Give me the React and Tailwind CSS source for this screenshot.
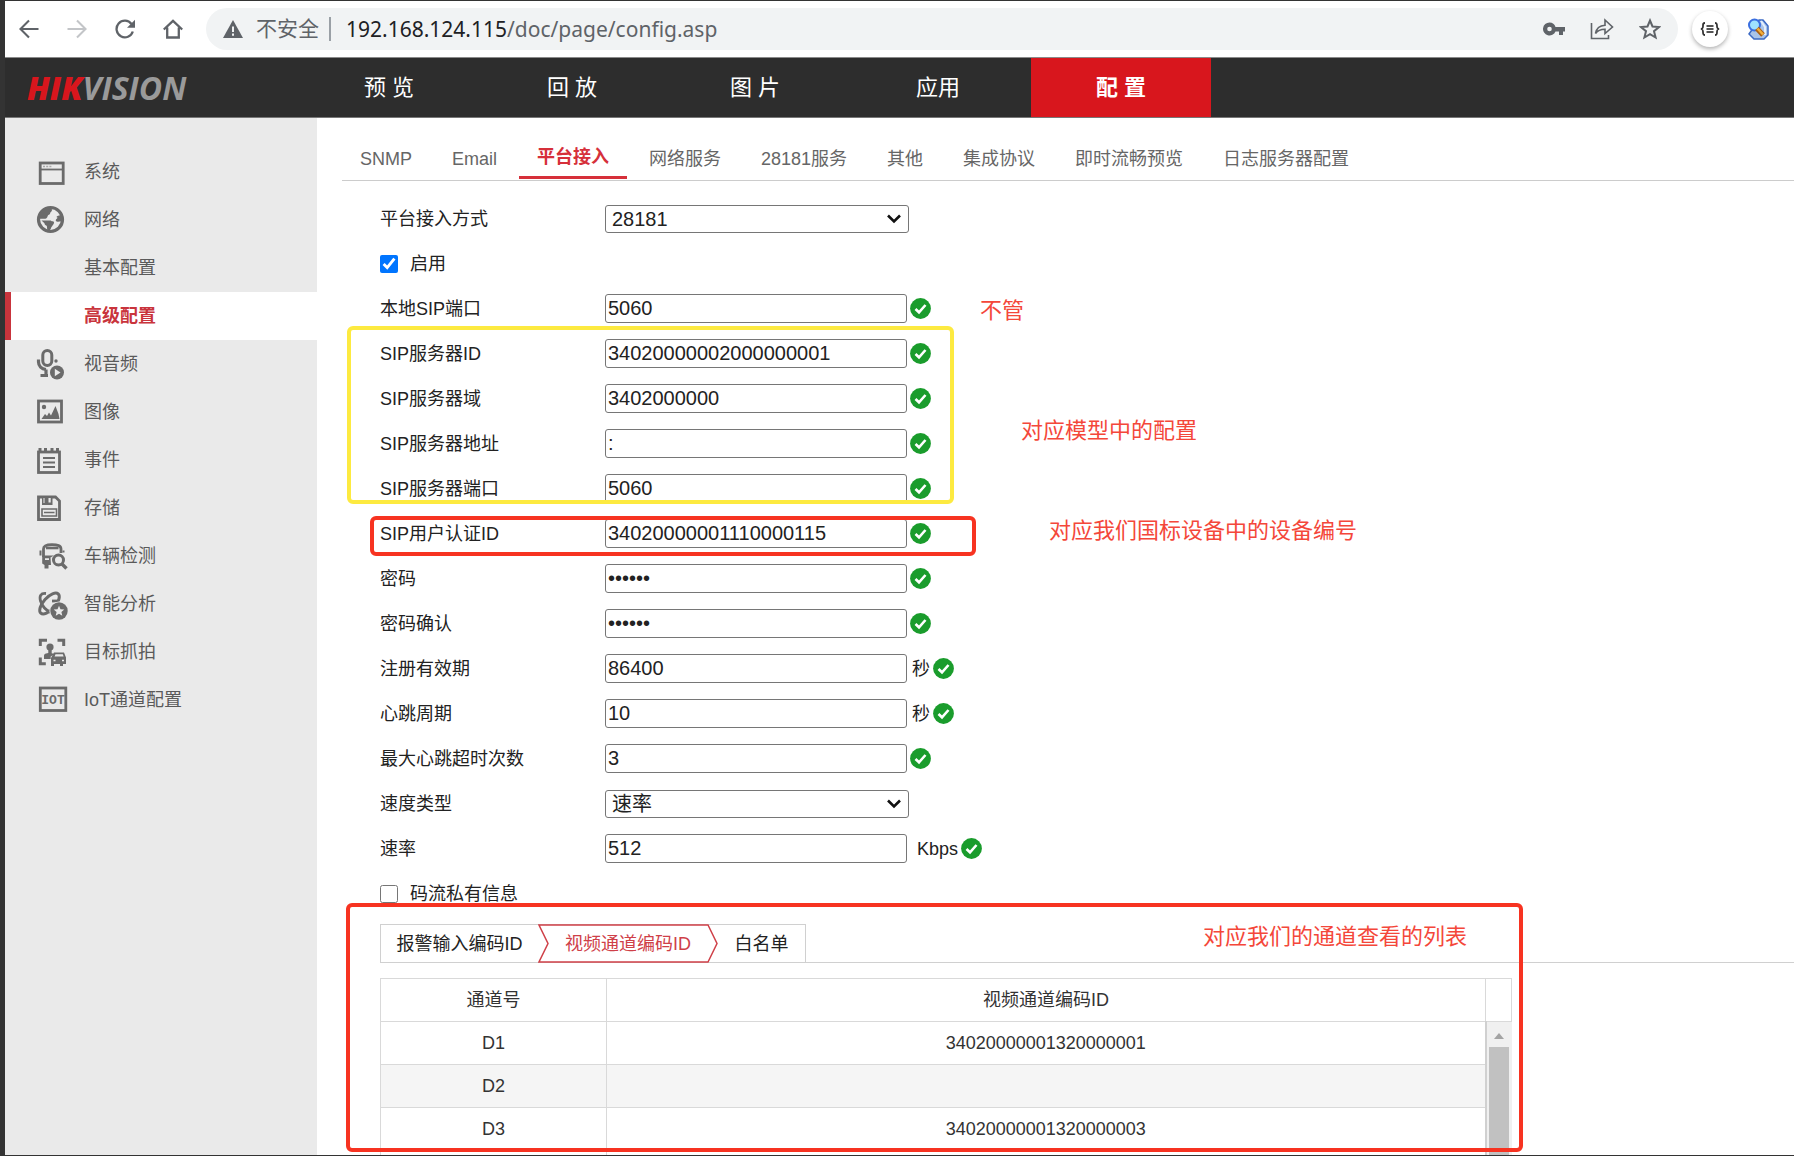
import React from "react";

const G = "#6b6b6b";

function Icon({ children }) {
  return (
    <svg viewBox="0 0 32 32" className="h-8 w-8 shrink-0" fill="none" stroke={G} strokeWidth="2.8" aria-hidden="true">
      {children}
    </svg>
  );
}

const icons = {
  system: (
    <Icon>
      <rect x="4.2" y="7" width="23" height="20.5" />
      <path d="M4 13.500h23" strokeWidth="1.8" />
      <path d="M7 10.500h9" strokeWidth="1.4" strokeDasharray="2 1.2" stroke="#aaa" />
    </Icon>
  ),
  network: (
    <Icon>
      <circle cx="14.5" cy="15.500" r="12" strokeWidth="3.2" />
      <path
        stroke="none"
        fill={G}
        d="M11 3c3 .2 5 1 5 3 0 1.600-1.600 1.800-1.800 3.200-.2 1.600-2.400 1.400-2.600 3-.2 1.600-1.600 2.600-3.600 2.600H3l1-6zM5.500 16.500h8.500c1.200 0 1.400.8 2.600.8 1.600 0 1.800 1.400 1 2.800l-2.400 3.400c-.4 1.800-1.200 3-2.400 3-1.600 0-1.800-1.800-1.800-3.600 0-1.800-2.500-1.400-2.500-3.600zM26 10.500l-4.500 1.500c-1.400.4-1 1.600.2 1.800L20 15.500c-.8 1.400.4 2.400 2 2.200l5-.7z"
      />
    </Icon>
  ),
  av: (
    <Icon>
      <rect x="6.800" y="2.500" width="9" height="15" rx="4.500" strokeWidth="3" />
      <path d="M2.500 11.500V14c0 4 3 7 7.500 7.500M10 21.500v5M4.500 27.500H12" strokeWidth="3.200" />
      <circle cx="20" cy="13" r="1.700" fill={G} stroke="none" />
      <circle cx="21" cy="24.500" r="7" fill={G} stroke="none" />
      <path d="M18.800 20.700l5.700 3.800-5.700 3.800z" fill="#eaeaea" stroke="none" />
    </Icon>
  ),
  image: (
    <Icon>
      <rect x="2.500" y="5" width="23" height="21" />
      <circle cx="8" cy="11" r="2.200" fill={G} stroke="none" />
      <path d="M5.500 23l3.500-5 2 2 2-3.500 2 3 4.500-9.500 3 8 1 5z" fill={G} stroke="none" />
    </Icon>
  ),
  event: (
    <Icon>
      <rect x="2.500" y="8" width="21" height="20.500" />
      <path d="M4 4v4M9.500 4v4M16 4v4M21.500 4v4" strokeWidth="3" />
      <path d="M7 14h12M7 18.500h12M7 23h12" strokeWidth="1.800" />
    </Icon>
  ),
  storage: (
    <Icon>
      <path d="M2.500 5h17l4 4v18.500h-21z" />
      <path d="M6 4.500h10.500V13H6z" fill={G} stroke="none" />
      <path d="M12.500 6h2.200v4.500h-2.200zM7.500 6h1v5h-1z" fill="#eaeaea" stroke="none" />
      <path d="M6 17h14.500v7H6zM8 20.500h10.500" strokeWidth="1.600" />
    </Icon>
  ),
  vehicle: (
    <Icon>
      <path d="M7.500 17V9c0-3.500 3-4.300 8.500-4.300s9 .8 9 4.300v4" strokeWidth="2.800" />
      <path d="M10 8h12.500" strokeWidth="2.600" />
      <path d="M4.500 10.500v5M27.500 10.500v2" strokeWidth="2" />
      <path d="M6.200 15.500H18l-3.500 2 .5 7.500H12.500v3.500H8.500V25l-2.300-1.500zM9 20h4v-1.800H9z" fill={G} stroke="none" fillRule="evenodd" />
      <circle cx="22.500" cy="20" r="5" strokeWidth="3" />
      <path d="M26 24l4.500 4.500" strokeWidth="3.400" />
    </Icon>
  ),
  analysis: (
    <Icon>
      <ellipse cx="13.500" cy="15.500" rx="6" ry="13" transform="rotate(42 13.500 15.500)" strokeWidth="3" />
      <path d="M10 5.500C4.500 5 3.200 8 4.500 13c1.600 4.600 5.500 9.500 10.500 11.500" strokeWidth="2.800" />
      <path d="M16 13h6.500" strokeWidth="2.800" />
      <circle cx="23" cy="23" r="9.600" fill="#eaeaea" stroke="none" />
      <circle cx="23" cy="23" r="8.700" fill={G} stroke="none" />
      <path d="M23 17.800l1.500 3.500 3.800.3-2.900 2.500.9 3.700-3.300-2-3.300 2 .9-3.700-2.900-2.500 3.800-.3z" fill="#eaeaea" stroke="none" />
    </Icon>
  ),
  capture: (
    <Icon>
      <path d="M4.300 10V4.300H11M21.500 4.300h6.200V10M4.300 21.500v6.200h5.500" strokeWidth="3" />
      <circle cx="14" cy="11" r="3.600" fill={G} stroke="none" />
      <path d="M12.300 13h3.400v4.200l3 .8-4 2.500V23H8v-3.500c0-1.200 1-1.700 2-2l2.300-.5z" fill={G} stroke="none" />
      <path d="M18 16.500h10l2 5v6.500h-3v2h-3v-2h-6v2h-3v-8z" fill={G} stroke="none" />
      <path d="M19.500 18.300h7.300l.8 2.200h-9z" fill="#eaeaea" stroke="none" />
      <path d="M17.500 24.500h2M26 24.500h2" stroke="#eaeaea" strokeWidth="1.400" />
    </Icon>
  ),
  iot: (
    <Icon>
      <rect x="4.300" y="4" width="25.500" height="22.500" />
      <text x="17" y="20" textAnchor="middle" fontSize="13" fontWeight="bold" fontFamily="Liberation Mono, monospace" fill={G} stroke="none">
        IOT
      </text>
    </Icon>
  ),
};

const sideItems = [
  { label: "系统", icon: "system" },
  { label: "网络", icon: "network" },
  { label: "基本配置" },
  { label: "高级配置", active: true },
  { label: "视音频", icon: "av" },
  { label: "图像", icon: "image" },
  { label: "事件", icon: "event" },
  { label: "存储", icon: "storage" },
  { label: "车辆检测", icon: "vehicle" },
  { label: "智能分析", icon: "analysis" },
  { label: "目标抓拍", icon: "capture" },
  { label: "IoT通道配置", icon: "iot" },
];

function Ok() {
  return (
    <svg viewBox="0 0 21 21" className="h-[21px] w-[21px] shrink-0" role="img" aria-label="有效">
      <circle cx="10.500" cy="10.500" r="10.400" fill="#1a9c2c" />
      <path d="M5.500 11l3.500 3.300 6.500-7.300" fill="none" stroke="#fff" strokeWidth="2.600" />
    </svg>
  );
}

function Field({ id, label, value, unit, type = "text" }) {
  return (
    <div className="flex h-[45px] items-center">
      <label htmlFor={id} className="w-[225px] shrink-0">
        {label}
      </label>
      <input
        id={id}
        type={type}
        defaultValue={value}
        className="h-[29px] w-[302px] shrink-0 rounded-[3px] border border-[#767676] bg-white px-[2px] pb-px text-[20px] leading-none text-[#222]"
      />
      {unit && <span className={unit === "Kbps" ? "pl-[10px]" : "pl-[5px]"}>{unit}</span>}
      <span className="pl-[3px]">
        <Ok />
      </span>
    </div>
  );
}

function SelectField({ id, label, value }) {
  return (
    <div className="flex h-[45px] items-center">
      <label htmlFor={id} className="w-[225px] shrink-0">
        {label}
      </label>
      <div className="relative w-[304px] shrink-0">
        <select
          id={id}
          defaultValue={value}
          className="block h-[28px] w-full appearance-none rounded-[3px] border border-[#767676] bg-white px-[6px] text-[20px] leading-[24px] text-[#222]"
        >
          <option>{value}</option>
        </select>
        <svg viewBox="0 0 14 10" className="pointer-events-none absolute right-2 top-[9px] h-[10px] w-[14px]" fill="none" stroke="#111" strokeWidth="2.600" aria-hidden="true">
          <path d="M1 1.500l6 6 6-6" />
        </svg>
      </div>
    </div>
  );
}

function Check({ id, label, checked }) {
  return (
    <div className="flex h-[45px] items-center gap-3">
      <input id={id} type="checkbox" defaultChecked={checked} className="h-[18px] w-[18px]" />
      <label htmlFor={id}>{label}</label>
    </div>
  );
}

function AddressBar() {
  return (
    <header className="flex h-[57px] shrink-0 items-center border-b border-[#8a8a8a] bg-white pl-[14px] text-[#5f6368]">
      <div className="flex w-[187px] shrink-0 items-center gap-7">
        <button aria-label="后退">
          <svg viewBox="0 0 20 20" className="h-5 w-5" fill="none" stroke="currentColor" strokeWidth="2.100"><path d="M19.500 10H2M10 1.500L1.500 10l8.500 8.500" /></svg>
        </button>
        <button aria-label="前进" className="text-[#c3c5c8]">
          <svg viewBox="0 0 20 20" className="h-5 w-5" fill="none" stroke="currentColor" strokeWidth="2.100"><path d="M.5 10H18M10 1.500l8.500 8.500-8.500 8.500" /></svg>
        </button>
        <button aria-label="重新加载">
          <svg viewBox="0 0 20 20" className="h-5 w-5" fill="none" stroke="currentColor" strokeWidth="2.300"><path d="M17.800 12.500A8.300 8.300 0 1 1 16.500 5" /><path d="M20 .8v8h-8z" fill="currentColor" stroke="none" /></svg>
        </button>
        <button aria-label="主页">
          <svg viewBox="0 0 20 20" className="h-5 w-5" fill="none" stroke="currentColor" strokeWidth="2.300"><path d="M.8 10.500L10 1.800l9.200 8.700M4.200 8.500v10h11.600v-10" /></svg>
        </button>
      </div>
      <div className="flex h-[42px] grow items-center rounded-full bg-[#f1f3f4] pl-[17px] pr-[17px]">
        <svg viewBox="0 0 20 18" className="h-[18px] w-5 shrink-0" aria-hidden="true">
          <path d="M10 0l10 18H0z" fill="#5f6368" />
          <path d="M10 6.500v5.500M10 13.500v2.300" stroke="#f1f3f4" strokeWidth="2" />
        </svg>
        <span className="pl-[13px] text-[21px] leading-6">不安全</span>
        <span className="ml-[10px] h-6 w-[2px] bg-[#9aa0a6]" />
        <span className="grow pl-[15px] font-['Noto_Sans',sans-serif] text-[21px] leading-6">
          <span className="text-[#202124]">192.168.124.115</span>/doc/page/config.asp
        </span>
        <div className="flex items-center gap-[25px]">
          <button aria-label="密码">
            <svg viewBox="0 0 22 14" className="h-[14px] w-[22px]" fill="currentColor"><path fillRule="evenodd" d="M6.500.5a6.500 6.500 0 1 0 6 9H16V13h4V9.500h2V5H12.500a6.500 6.500 0 0 0-6-4.500zm0 4.200a2.300 2.300 0 1 1 0 4.600 2.300 2.300 0 0 1 0-4.600z" /></svg>
          </button>
          <button aria-label="分享">
            <svg viewBox="0 0 24 22" className="h-[22px] w-6" fill="none" stroke="currentColor" strokeWidth="1.600"><path d="M1.500 5v15.500h17V17M5.500 15.500c.8-5 4-8 9.500-8.300V2l7.500 7-7.500 6.500v-4.200c-4.300 0-7.300 1-9.500 4.200z" /></svg>
          </button>
          <button aria-label="收藏">
            <svg viewBox="0 0 22 22" className="h-[22px] w-[22px]" fill="none" stroke="currentColor" strokeWidth="2"><path d="M11 2.500l2.500 6 6.500.5-5 4.200 1.600 6.300L11 16.200l-5.600 3.300L7 13.200 2 9l6.500-.5z" /></svg>
          </button>
        </div>
      </div>
      <button aria-label="扩展" className="ml-[14px] flex h-9 w-9 shrink-0 items-center justify-center rounded-full bg-white shadow-[0_2px_4px_rgba(0,0,0,0.3)]">
        <svg viewBox="0 0 20 14" className="h-[14px] w-5" fill="none" stroke="#333" strokeWidth="1.800" aria-hidden="true">
          <path d="M5 1C3 1 3 2 3 4s0 2.500-2 3c2 .5 2 1 2 3s0 3 2 3M15 1c2 0 2 1 2 3s0 2.500 2 3c-2 .5-2 1-2 3s0 3-2 3" />
          <path d="M6.500 4h7M6.500 7h7M6.500 10h7" stroke="#555" />
        </svg>
      </button>
      <button aria-label="搜索扩展" className="ml-[19px] mr-[25px] shrink-0">
        <svg viewBox="0 0 22 22" className="h-[22px] w-[22px]" aria-hidden="true">
          <path d="M12 2h4l5 6v9l-4 4H7l-5-5z" fill="#a9c4ea" stroke="#3b69c4" strokeWidth="1.500" />
          <path d="M14 3l4 6v8" fill="none" stroke="#e4effc" strokeWidth="2" />
          <circle cx="7.500" cy="7" r="5.500" fill="#9fe3ff" stroke="#3a6fe0" strokeWidth="2" />
          <path d="M10 10.500l6 6.500" stroke="#a85f14" strokeWidth="5" />
          <path d="M10.500 10.500l5.500 6" stroke="#f3ae3a" strokeWidth="2.500" />
        </svg>
      </button>
    </header>
  );
}

const navItems = ["预 览", "回 放", "图 片", "应用", "配 置"];

function TopNav() {
  return (
    <nav className="flex h-[60px] shrink-0 items-stretch border-b border-[#777] bg-[#2d2d2d]">
      <div className="flex w-[294px] shrink-0 items-center pl-[22px] font-['Open_Sans',sans-serif] text-[32px] font-bold italic leading-none text-[#9a9a9a]">
        <span className="font-extrabold text-[#d8161d]">HIK</span>
        <span>VISION</span>
      </div>
      <div className="flex gap-[3px]">
        {navItems.map((t) => (
          <a
            key={t}
            href="#"
            className={
              t === "配 置"
                ? "flex w-[180px] items-center justify-center bg-[#d8161d] text-[22px] font-bold text-white"
                : "flex w-[180px] items-center justify-center text-[22px] text-white"
            }
          >
            {t}
          </a>
        ))}
      </div>
    </nav>
  );
}

function Sidebar() {
  return (
    <aside className="w-[312px] shrink-0 bg-[#eaeaea] pt-[30px]">
      {sideItems.map((i) =>
        i.active ? (
          <a key={i.label} href="#" className="flex h-12 items-center border-l-[6px] border-[#c9343c] bg-white pl-[73px] font-bold text-[#c9343c]">
            {i.label}
          </a>
        ) : (
          <a key={i.label} href="#" className="flex h-12 items-center pl-[31px] text-[#5a5a5a]">
            <span className="mr-4 w-8">{i.icon && icons[i.icon]}</span>
            {i.label}
          </a>
        )
      )}
    </aside>
  );
}

const tabs = ["SNMP", "Email", "平台接入", "网络服务", "28181服务", "其他", "集成协议", "即时流畅预览", "日志服务器配置"];
const note = "absolute whitespace-nowrap text-[22px] leading-7 text-[#f4473a]";

function Note({ className, children }) {
  return <span className={`${note} ${className}`}>{children}</span>;
}

const channels = [
  ["D1", "34020000001320000001"],
  ["D2", ""],
  ["D3", "34020000001320000003"],
  ["", ""],
];

function ChannelTable() {
  return (
    <table className="mt-[15px] w-[1132px] table-fixed border-collapse text-center text-[#333]">
      <colgroup>
        <col className="w-[226px]" />
        <col />
        <col className="w-[26px]" />
      </colgroup>
      <thead>
        <tr className="h-[43px]">
          <th className="border border-[#d9d9d9] font-normal">通道号</th>
          <th className="border border-[#d9d9d9] font-normal">视频通道编码ID</th>
          <th className="border border-[#d9d9d9]" />
        </tr>
      </thead>
      <tbody>
        {channels.map(([name, id], n) => (
          <tr key={n} className={n === 1 ? "h-[43px] bg-[#f5f5f5]" : "h-[43px]"}>
            <td className="border border-[#d9d9d9]">{name}</td>
            <td className="border border-[#d9d9d9]">{id}</td>
            {n === 0 && (
              <td rowSpan={4} className="border-l-2 border-[#d0d0d0] bg-[#f0f0f0] p-0 align-top">
                <svg viewBox="0 0 10 6" className="mx-auto mt-[11px] h-[6px] w-[10px]" aria-hidden="true">
                  <path d="M5 0l5 6H0z" fill="#a3a3a3" />
                </svg>
                <div className="mx-auto mt-2 h-[145px] w-5 bg-[#c1c1c1]" />
              </td>
            )}
          </tr>
        ))}
      </tbody>
    </table>
  );
}

export default function App() {
  return (
    <div className="flex h-screen flex-col overflow-hidden bg-[#333] pb-px pl-[5px] pt-px font-['Liberation_Sans','Noto_Sans_CJK_SC',sans-serif] text-[18px] leading-6">
      <AddressBar />
      <TopNav />
      <div className="flex min-h-0 grow overflow-hidden bg-white">
        <Sidebar />
        <main className="min-w-0 grow pl-[25px]">
          <div className="flex h-[63px] items-end gap-1 border-b border-[#ccc]">
            {tabs.map((t) => (
              <button
                key={t}
                className={
                  t === "平台接入"
                    ? "mb-px h-[38px] shrink-0 border-b-[3px] border-[#d6303a] px-[18px] pb-1 font-bold text-[#d6303a]"
                    : "h-[38px] shrink-0 px-[18px] pb-1 text-[#666]"
                }
              >
                {t}
              </button>
            ))}
          </div>
          <form className="pl-[38px] pt-[15px] text-[#222]">
            <SelectField id="mode" label="平台接入方式" value="28181" />
            <Check id="enable" label="启用" checked />
            <div className="relative">
              <Field id="localPort" label="本地SIP端口" value="5060" />
              <Note className="left-[600px] top-[11px]">不管</Note>
            </div>
            <div className="relative">
              <Field id="serverId" label="SIP服务器ID" value="34020000002000000001" />
              <Field id="serverDomain" label="SIP服务器域" value="3402000000" />
              <Field id="serverAddr" label="SIP服务器地址" value=":" />
              <Field id="serverPort" label="SIP服务器端口" value="5060" />
              <div className="pointer-events-none absolute -left-[33px] -top-[5px] h-[178px] w-[607px] rounded-[6px] border-4 border-[#fdea40]" />
              <Note className="left-[641px] top-[86px]">对应模型中的配置</Note>
            </div>
            <div className="relative">
              <Field id="authId" label="SIP用户认证ID" value="34020000001110000115" />
              <div className="pointer-events-none absolute -left-[10px] top-[5px] h-10 w-[606px] rounded-[6px] border-4 border-[#f73321]" />
              <Note className="left-[669px] top-[6px]">对应我们国标设备中的设备编号</Note>
            </div>
            <Field id="pwd" label="密码" value="123456" type="password" />
            <Field id="pwd2" label="密码确认" value="123456" type="password" />
            <Field id="valid" label="注册有效期" value="86400" unit="秒" />
            <Field id="beat" label="心跳周期" value="10" unit="秒" />
            <Field id="beatMax" label="最大心跳超时次数" value="3" />
            <SelectField id="speedType" label="速度类型" value="速率" />
            <Field id="speed" label="速率" value="512" unit="Kbps" />
            <Check id="private" label="码流私有信息" />
            <section className="relative pt-2">
              <div className="flex h-[39px] border-b border-[#d0d0d0]">
                <button type="button" className="w-[158px] border-l border-t border-[#d0d0d0] text-center">
                  报警输入编码ID
                </button>
                <button type="button" className="relative w-[180px] border-t border-[#d0d0d0] text-center text-[#cf4048]">
                  <svg viewBox="0 0 180 39" className="absolute -top-px left-0 h-[39px] w-[180px]" fill="none" stroke="#cf4048" strokeWidth="1.500" aria-hidden="true">
                    <path d="M1 1h169l9 18.500-9 18.500H1l9-18.500z" />
                  </svg>
                  视频通道编码ID
                </button>
                <button type="button" className="w-[88px] border-r border-t border-[#d0d0d0] text-center">
                  白名单
                </button>
              </div>
              <ChannelTable />
              <div className="pointer-events-none absolute -left-[34px] -top-[13px] h-[249px] w-[1177px] rounded-[6px] border-4 border-[#f73321]" />
              <Note className="left-[823px] top-[7px]">对应我们的通道查看的列表</Note>
            </section>
          </form>
        </main>
      </div>
    </div>
  );
}
